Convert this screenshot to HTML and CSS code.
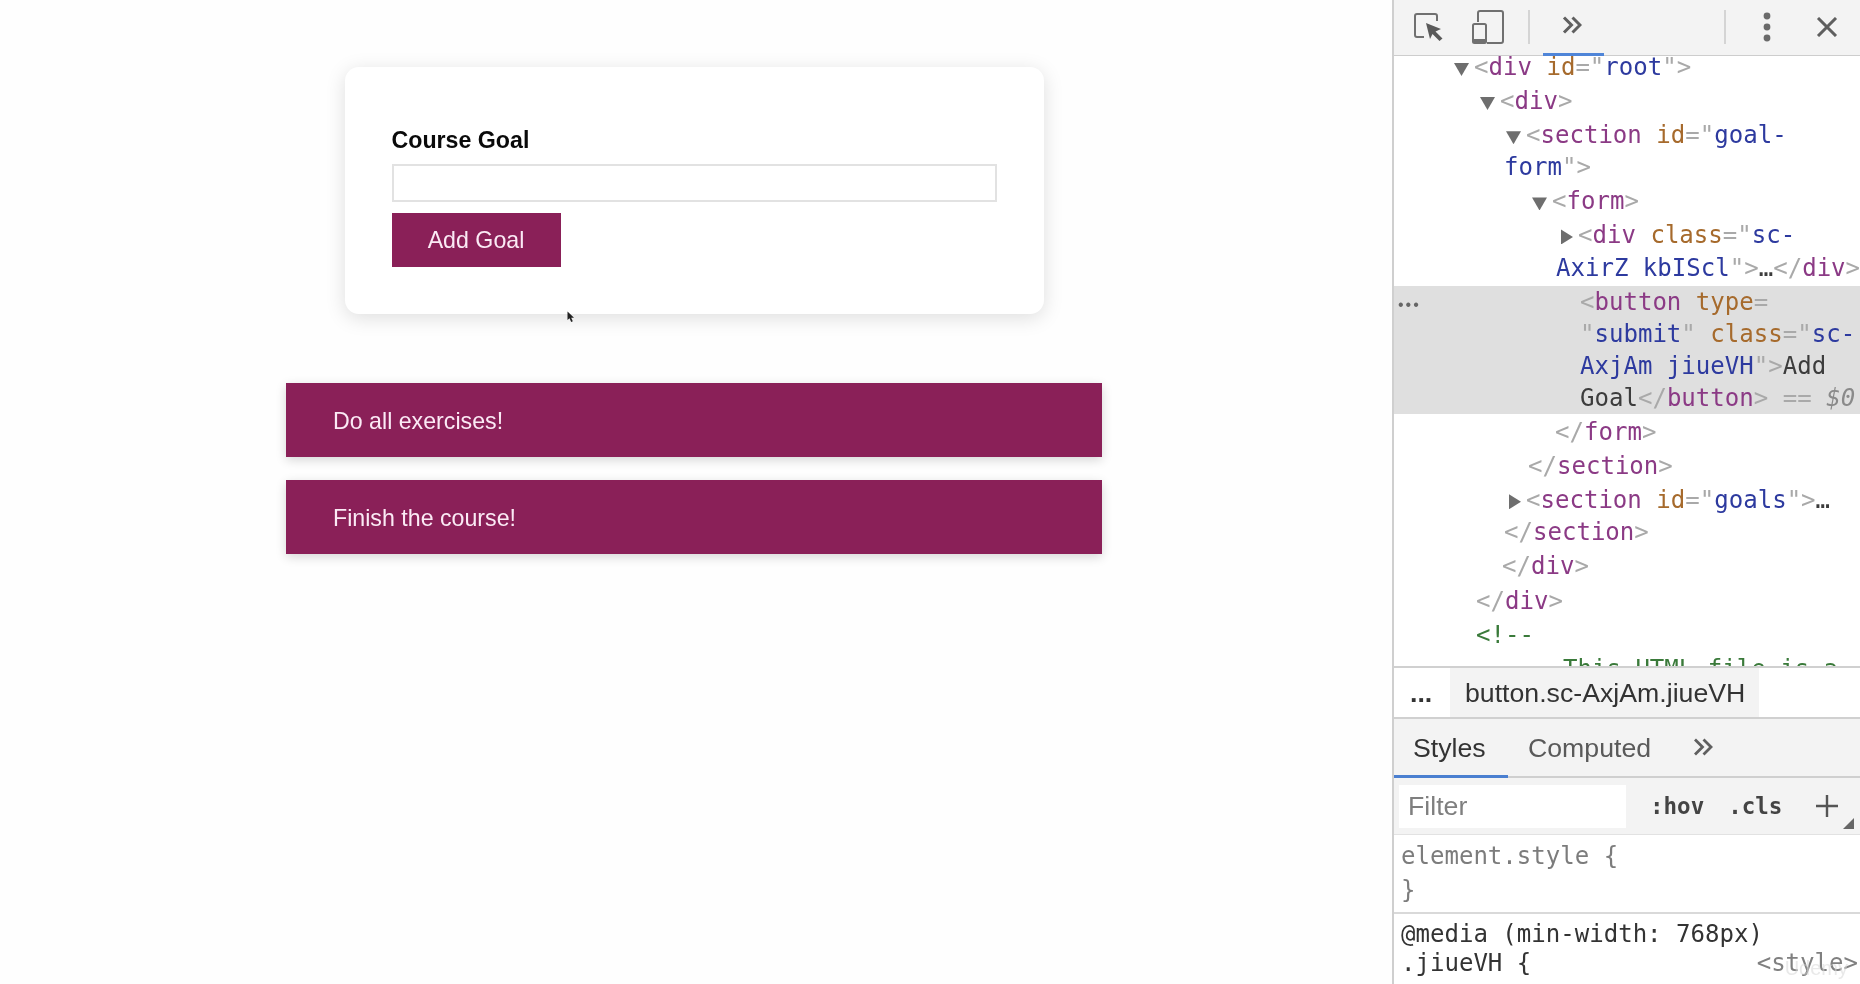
FILE: index.html
```html
<!DOCTYPE html>
<html lang="en">
<head>
<meta charset="utf-8">
<title>Course Goals</title>
<link rel="stylesheet" href="styles.css">
</head>
<body>
<div class="screen">
  <main class="app">
    <section class="card">
      <label class="label">Course Goal</label>
      <div class="input"></div>
      <button class="btn" type="button">Add Goal</button>
    </section>
    <ul class="goals">
      <li class="goal">Do all exercises!</li>
      <li class="goal">Finish the course!</li>
    </ul>
    <svg class="cursor" width="8" height="12" viewBox="0 0 8 12"><path d="M0.5 0.5V9L2.5 7.3L4.2 11L5.8 10.2L4.2 6.8H7Z" fill="#222"/></svg>
  </main>
  <aside class="devtools">
    <div class="toolbar">
      <svg class="ic-inspect" width="32" height="32" viewBox="0 0 32 32"><path d="M12 26H5a2 2 0 0 1-2-2V5a2 2 0 0 1 2-2H23a2 2 0 0 1 2 2V10" fill="none" stroke="#707070" stroke-width="2"/><path d="M14 12L29 18L23.5 20.5L30.5 27.5L27.5 30L20.5 23L18 28Z" fill="#5a5a5a"/></svg>
      <svg class="ic-device" width="36" height="36" viewBox="0 0 36 36"><path d="M8 13V4a2 2 0 0 1 2-2H31a2 2 0 0 1 2 2V32a2 2 0 0 1-2 2H17" fill="none" stroke="#707070" stroke-width="2"/><rect x="3" y="15" width="13" height="19" rx="1.5" fill="#f3f3f3" stroke="#707070" stroke-width="2"/><rect x="3" y="30" width="13" height="4" fill="#707070"/></svg>
      <span class="sep sep-a"></span>
      <span class="more-tab"><svg width="20" height="18" viewBox="0 0 20 18"><path d="M2 1.5L9.5 9L2 16.5M10.5 1.5L18 9L10.5 16.5" fill="none" stroke="#5f5f5f" stroke-width="3"/></svg></span>
      <span class="sep sep-b"></span>
      <svg class="ic-kebab" width="8" height="30" viewBox="0 0 8 30"><circle cx="4" cy="4" r="3.4" fill="#6a6a6a"/><circle cx="4" cy="15" r="3.4" fill="#6a6a6a"/><circle cx="4" cy="26" r="3.4" fill="#6a6a6a"/></svg>
      <svg class="ic-close" width="22" height="20" viewBox="0 0 22 20"><path d="M2 1L20 19M20 1L2 19" fill="none" stroke="#5f5f5f" stroke-width="3"/></svg>
    </div>

    <div class="dom">
      <div class="tree">
        <div class="node p-root"><span class="tri down"></span><span class="b">&lt;</span><span class="t">div</span> <span class="a">id</span><span class="b">=&quot;</span><span class="v">root</span><span class="b">&quot;&gt;</span></div>
        <div class="node p-div"><span class="tri down"></span><span class="b">&lt;</span><span class="t">div</span><span class="b">&gt;</span></div>
        <div class="node p-sec"><span class="tri down"></span><span class="b">&lt;</span><span class="t">section</span> <span class="a">id</span><span class="b">=&quot;</span><span class="v">goal-<br>form</span><span class="b">&quot;&gt;</span></div>
        <div class="node p-form"><span class="tri down"></span><span class="b">&lt;</span><span class="t">form</span><span class="b">&gt;</span></div>
        <div class="node p-inner"><span class="tri right"></span><span class="b">&lt;</span><span class="t">div</span> <span class="a">class</span><span class="b">=&quot;</span><span class="v">sc-<br>AxirZ kbIScl</span><span class="b">&quot;&gt;</span><span class="x">…</span><span class="b">&lt;/</span><span class="t">div</span><span class="b">&gt;</span></div>
        <div class="node selected p-btn"><span class="dots">•••</span><span class="b">&lt;</span><span class="t">button</span> <span class="a">type</span><span class="b">=</span><br><span class="b">&quot;</span><span class="v">submit</span><span class="b">&quot;</span> <span class="a">class</span><span class="b">=&quot;</span><span class="v">sc-<br>AxjAm jiueVH</span><span class="b">&quot;&gt;</span><span class="x">Add<br>Goal</span><span class="b">&lt;/</span><span class="t">button</span><span class="b">&gt;</span> <span class="b">==</span> <em class="eq">$0</em></div>
        <div class="node p-cform"><span class="b">&lt;/</span><span class="t">form</span><span class="b">&gt;</span></div>
        <div class="node p-csec"><span class="b">&lt;/</span><span class="t">section</span><span class="b">&gt;</span></div>
        <div class="node p-goals"><span class="tri right"></span><span class="b">&lt;</span><span class="t">section</span> <span class="a">id</span><span class="b">=&quot;</span><span class="v">goals</span><span class="b">&quot;&gt;</span><span class="x">…</span><br><span class="b">&lt;/</span><span class="t">section</span><span class="b">&gt;</span></div>
        <div class="node p-cdiv"><span class="b">&lt;/</span><span class="t">div</span><span class="b">&gt;</span></div>
        <div class="node p-croot"><span class="b">&lt;/</span><span class="t">div</span><span class="b">&gt;</span></div>
        <div class="node p-croot c">&lt;!--</div>
        <div class="node p-com c">This HTML file is a</div>
      </div>
    </div>

    <div class="crumbs"><span class="crumb-more">...</span><span class="crumb">button.sc-AxjAm.jiueVH</span></div>

    <div class="tabs">
      <span class="tab active">Styles</span>
      <span class="tab tab-computed">Computed</span>
      <svg class="tab-more" width="20" height="18" viewBox="0 0 20 18"><path d="M2 1.5L9.5 9L2 16.5M10.5 1.5L18 9L10.5 16.5" fill="none" stroke="#5f5f5f" stroke-width="2.8"/></svg>
    </div>

    <div class="filter">
      <span class="filter-input">Filter</span>
      <span class="flag flag-hov">:hov</span>
      <span class="flag flag-cls">.cls</span>
      <svg class="plus" width="24" height="24" viewBox="0 0 24 24"><path d="M12 1V23M1 12H23" stroke="#555" stroke-width="2.4"/></svg>
      <span class="corner"></span>
    </div>

    <div class="rules">
      <div class="rule muted">
        <div>element.style {</div>
        <div>}</div>
      </div>
      <div class="rule">
        <div>@media (min-width: 768px)</div>
        <div class="rule-head"><span>.jiueVH {</span><span class="source">&lt;style&gt;</span></div>
      </div>
    </div>
    <span class="watermark">Udemy</span>
  </aside>
</div>
</body>
</html>
```

FILE: styles.css
```css
* { box-sizing: border-box; }
html, body { margin: 0; height: 100%; overflow: hidden; background: #fefefe; }
.screen {
  display: flex;
  width: 1860px;
  height: 984px;
  overflow: hidden;
  filter: blur(0.55px);
  font-family: "Liberation Sans", Arial, sans-serif;
}

/* App */
.app {
  position: relative;
  width: 1392px;
  flex: none;
  display: flex;
  flex-direction: column;
  align-items: center;
  padding-right: 4px;
  background: #fefefe;
}
.card {
  width: 699px;
  height: 247px;
  margin-top: 67px;
  padding: 59px 46px 0 47px;
  border-radius: 14px;
  background: #fff;
  box-shadow: 0 4px 20px rgba(0, 0, 0, 0.13);
}
.label {
  display: block;
  height: 28px;
  margin-bottom: 10px;
  font-size: 23.2px;
  line-height: 28px;
  font-weight: 700;
  color: #0a0a0a;
}
.input {
  width: 605px;
  height: 38px;
  margin-bottom: 11px;
  border: 2px solid #e2e2e2;
  background: #fff;
}
.btn {
  display: block;
  width: 169px;
  height: 54px;
  padding: 1px 0 0;
  border: 1px solid #8a2058;
  background: #8a2058;
  color: #fbeaf5;
  font: 23.2px/1 "Liberation Sans", Arial, sans-serif;
}
.goals {
  list-style: none;
  margin: 69px 0 0;
  padding: 0;
  width: 816px;
  display: flex;
  flex-direction: column;
  gap: 23px;
}
.goal {
  height: 74px;
  padding-left: 47px;
  background: #8a2058;
  color: #fbeaf5;
  font-size: 23.2px;
  line-height: 76px;
  box-shadow: 0 3px 10px rgba(0, 0, 0, 0.16);
}
.cursor { position: absolute; left: 567px; top: 311px; }

/* DevTools */
.devtools {
  position: relative;
  flex: 1;
  min-width: 0;
  height: 984px;
  overflow: hidden;
  border-left: 2px solid #cfcfcf;
  background: #fff;
  display: flex;
  flex-direction: column;
}
.toolbar {
  flex: none;
  height: 56px;
  display: flex;
  align-items: center;
  background: #f3f3f3;
  border-bottom: 1px solid #cdcdcd;
}
.toolbar svg { flex: none; display: block; }
.ic-inspect { margin-left: 18px; margin-bottom: 2px; }
.ic-device { margin-left: 26px; margin-bottom: 2px; }
.sep { flex: none; width: 2px; height: 34px; background: #d4d4d4; margin-bottom: 2px; }
.sep-a { margin-left: 22px; }
.more-tab {
  flex: none;
  align-self: stretch;
  width: 61px;
  margin-left: 13px;
  display: flex;
  align-items: center;
  justify-content: center;
  padding-right: 4px;
  padding-bottom: 4px;
  border-bottom: 3px solid #4f85d8;
  height: 56px;
}
.sep-b { margin-left: 120px; }
.ic-kebab { margin-left: 37px; margin-bottom: 2px; }
.ic-close { margin-left: 45px; margin-bottom: 2px; }

.dom {
  flex: none;
  height: 612px;
  overflow: hidden;
  background: #fff;
  border-bottom: 2px solid #d0d0d0;
}
.tree {
  margin-top: -5px;
  font-family: "DejaVu Sans Mono", "Liberation Mono", monospace;
  font-size: 24.05px;
  line-height: 32.1px;
  color: #333;
}
.node { position: relative; margin-bottom: 2px; white-space: pre; }
.selected { background: #dfdfdf; }
.p-root  { padding-left: 58px; }
.p-div   { padding-left: 84px; }
.p-sec   { padding-left: 110px; }
.p-form  { padding-left: 136px; }
.p-inner { padding-left: 162px; }
.p-btn   { padding-left: 186px; }
.p-cform { padding-left: 161px; }
.p-csec  { padding-left: 134px; }
.p-goals { padding-left: 110px; }
.p-cdiv  { padding-left: 108px; }
.p-croot { padding-left: 82px; }
.p-com   { padding-left: 169px; }
.tri {
  display: inline-block;
  vertical-align: -1px;
}
.tri.down { background: #6e6e6e; width: 15px; height: 13px; margin-left: 2px; margin-right: 5px; clip-path: polygon(0 0, 100% 0, 50% 100%); }
.tri.right { background: #6e6e6e; width: 12px; height: 15px; margin-left: 5px; margin-right: 5px; clip-path: polygon(0 0, 100% 50%, 0 100%); }
.b { color: #a9a9a9; }
.t { color: #8b3a85; }
.a { color: #a66a2c; }
.v { color: #2d3a9f; }
.x { color: #3c3c3c; }
.c { color: #3a7a3a; }
.eq { color: #8a8a8a; }
.dots {
  position: absolute;
  left: 4px;
  top: 3px;
  font: 16px/32px "Liberation Sans", Arial, sans-serif;
  letter-spacing: 2px;
  color: #666;
}

.crumbs {
  flex: none;
  height: 51px;
  display: flex;
  align-items: stretch;
  background: #fff;
  border-bottom: 2px solid #d0d0d0;
  font-size: 26.7px;
  color: #333;
}
.crumb-more { width: 56px; padding-left: 16px; line-height: 50px; font-weight: 700; }
.crumb { width: 309px; padding-left: 15px; line-height: 51px; background: #f3f3f3; }

.tabs {
  flex: none;
  height: 59px;
  display: flex;
  align-items: stretch;
  background: #f3f3f3;
  border-bottom: 2px solid #cfcfcf;
  font-size: 26.7px;
  color: #5a5a5a;
}
.tab { padding: 0 20px; line-height: 58px; }
.tab.active {
  width: 114px;
  flex: none;
  padding: 0 0 0 19px;
  color: #333;
  border-bottom: 3px solid #4a7fd0;
  margin-bottom: -2px;
}
.tab-computed { padding-left: 20px; }
.tab-more { align-self: center; margin-left: 22px; flex: none; margin-bottom: 2px; }

.filter {
  position: relative;
  flex: none;
  height: 57px;
  display: flex;
  align-items: center;
  background: #f3f3f3;
  border-bottom: 1px solid #e2e2e2;
}
.filter-input {
  width: 227px;
  height: 43px;
  margin-left: 5px;
  padding-left: 9px;
  background: #fff;
  color: #7f7f7f;
  font-size: 26.7px;
  line-height: 43px;
}
.flag {
  font-family: "DejaVu Sans Mono", "Liberation Mono", monospace;
  font-weight: 700;
  font-size: 22.5px;
  color: #444;
}
.flag-hov { margin-left: 24px; }
.flag-cls { margin-left: 24px; }
.plus { margin-left: 33px; flex: none; }
.corner {
  position: absolute;
  left: 449px;
  top: 40px;
  width: 11px;
  height: 11px;
  background: #666;
  clip-path: polygon(100% 0, 100% 100%, 0 100%);
}

.rules {
  flex: 1;
  font-family: "DejaVu Sans Mono", "Liberation Mono", monospace;
  font-size: 24.05px;
  line-height: 30px;
  color: #333;
  background: #fff;
}
.rule { padding: 5px 2px 7px 7px; }
.rule div { white-space: pre; }
.muted {
  color: #7c7c7c;
  height: 79px;
  padding-top: 4px;
  border-bottom: 2px solid #d9d9d9;
}
.muted div { line-height: 34px; }
.rule-head { display: flex; justify-content: space-between; line-height: 28px; }
.source { color: #808080; }
.watermark {
  position: absolute;
  right: 12px;
  bottom: 4px;
  font-size: 20px;
  color: rgba(215, 215, 215, 0.55);
}
```
